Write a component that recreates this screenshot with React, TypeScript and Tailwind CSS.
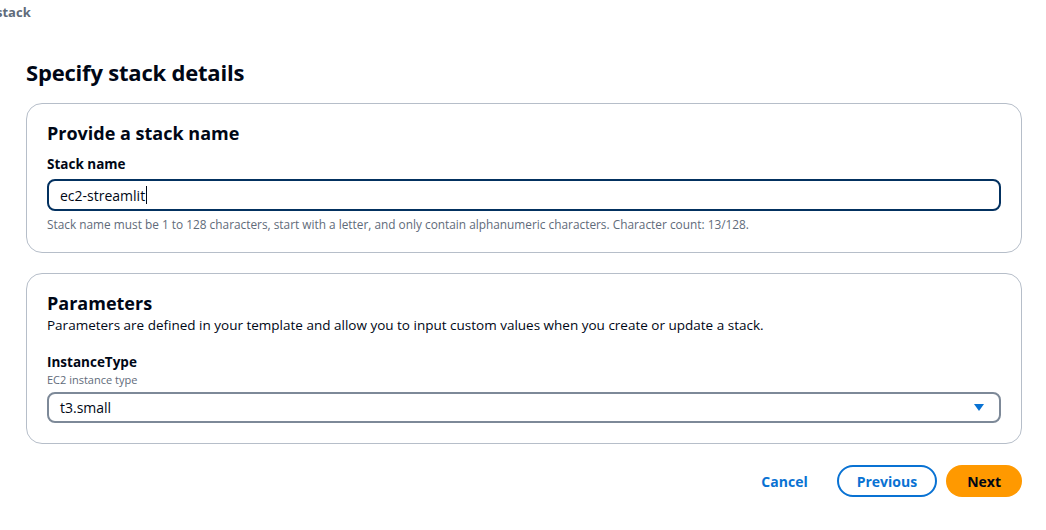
export default function App() {
  return (
    <main
      className="h-[530px] w-[1046px] overflow-hidden bg-white text-[#000716]"
      style={{ fontFamily: '"Open Sans", "Noto Sans", sans-serif' }}
    >
      <div className="ml-[-4px] pt-[3px] text-[13px] font-bold leading-[18px] text-[#5f6b7a]">
        stack
      </div>

      <div className="pl-[26px] pr-[24px]">
        <h1 className="mt-[36px] text-[22px] font-bold leading-[30px] tracking-[-0.2px]">
          Specify stack details
        </h1>

        <section className="mt-[16px] rounded-[16px] border border-[#b6bec9] px-[20px] pb-[19px] pt-[17px]">
          <h2 className="text-[18px] font-bold leading-[24px]">
            Provide a stack name
          </h2>
          <label className="mt-[9px] block text-[13.5px] font-bold leading-[20px]">
            Stack name
          </label>
          <div className="mt-[5px] flex h-[32px] items-center rounded-[8px] border-2 border-[#033160] px-[11px] text-[14px]">
            ec2-streamlit
            <span className="ml-[1px] h-[18px] w-px bg-[#000716]" />
          </div>
          <p className="mt-[4px] text-[11.85px] leading-[18px] text-[#5f6b7a]">
            Stack name must be 1 to 128 characters, start with a letter, and
            only contain alphanumeric characters. Character count: 13/128.
          </p>
        </section>

        <section className="mt-[20px] rounded-[16px] border border-[#b6bec9] px-[20px] pb-[20px] pt-[17px]">
          <h2 className="text-[18px] font-bold leading-[24px]">Parameters</h2>
          <p className="text-[13.5px] leading-[20px]">
            Parameters are defined in your template and allow you to input
            custom values when you create or update a stack.
          </p>
          <label className="mt-[17px] block text-[13.5px] font-bold leading-[20px]">
            InstanceType
          </label>
          <p className="text-[11px] leading-[16px] text-[#5f6b7a]">
            EC2 instance type
          </p>
          <div className="mt-[4px] flex h-[31px] items-center justify-between rounded-[8px] border-2 border-[#7d8998] pl-[11px] pr-[14px] text-[14px]">
            <span>t3.small</span>
            <svg width="12" height="9" viewBox="0 0 12 9">
              <path d="M1 1h10L6 8z" fill="#0972d3" />
            </svg>
          </div>
        </section>

        <div className="mt-[21px] flex items-center justify-end gap-[9px]">
          <button
            type="button"
            className="h-[32px] px-[18px] text-[14px] font-bold text-[#0972d3]"
          >
            Cancel
          </button>
          <button
            type="button"
            className="ml-[2px] h-[32px] rounded-full border-2 border-[#0972d3] px-[18px] text-[14px] font-bold text-[#0972d3]"
          >
            Previous
          </button>
          <button
            type="button"
            className="h-[32px] rounded-full bg-[#ff9900] px-[21px] text-[14px] font-bold text-[#000716]"
          >
            Next
          </button>
        </div>
      </div>
    </main>
  );
}
